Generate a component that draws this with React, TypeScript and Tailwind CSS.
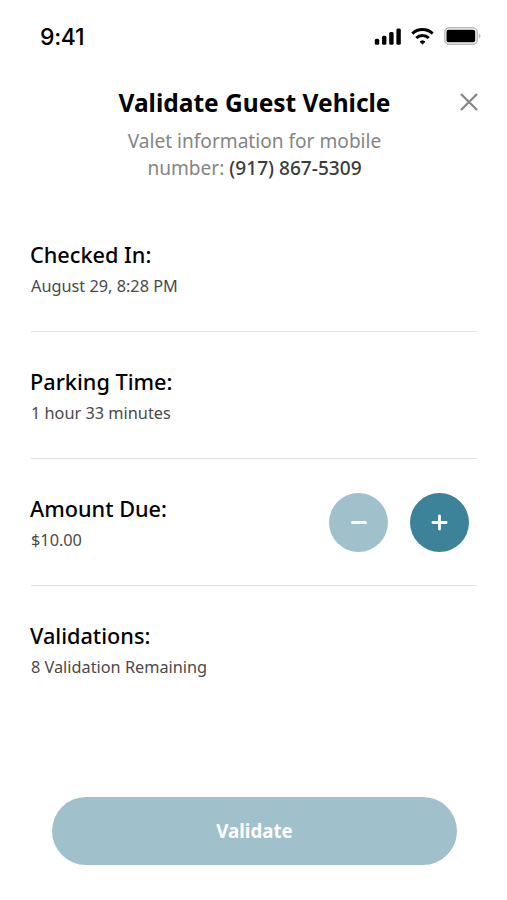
const rows = [
  { label: 'Checked In:', value: 'August 29, 8:28 PM' },
  { label: 'Parking Time:', value: '1 hour 33 minutes' },
  { label: 'Amount Due:', value: '$10.00', stepper: true },
  { label: 'Validations:', value: '8 Validation Remaining' },
];

function StatusBar() {
  return (
    <div className="flex h-[72px] items-center justify-between pl-10 pr-[26px]">
      <span className="pt-0.5 font-['Inter',sans-serif] text-[23px] font-medium leading-none tracking-[-0.3px]">9:41</span>
      <div className="flex items-center gap-[10px]">
        {/* Signal */}
        <svg width="27" height="17" viewBox="0 0 27 17" fill="currentColor">
          <rect x="0.8" y="10.8" width="4.4" height="6" rx="1.5" />
          <rect x="8" y="7.8" width="4.4" height="9" rx="1.5" />
          <rect x="15.2" y="4" width="4.4" height="12.8" rx="1.5" />
          <rect x="22.4" y="0.5" width="4.4" height="16.3" rx="1.5" />
        </svg>
        {/* Wifi */}
        <svg width="23" height="17" viewBox="0 0 23 17" fill="none" stroke="currentColor" strokeWidth="3" strokeLinejoin="round">
          <path d="M1.3 5.7a14.8 14.8 0 0 1 20.4 0" />
          <path d="M5.2 10a9.3 9.3 0 0 1 12.6 0" />
          <path d="M11.5 16l-2.4-2.300a3.800 3.800 0 0 1 4.800 0z" fill="currentColor" strokeWidth="1" />
        </svg>
        {/* Battery */}
        <svg width="37" height="18" viewBox="0 0 37 18">
          <rect x="0.8" y="0.8" width="32.4" height="16.4" rx="4.5" fill="none" stroke="#bdbdbd" strokeWidth="1.5" />
          <rect x="2.5" y="2.7" width="28.7" height="12.6" rx="2" fill="currentColor" />
          <path d="M34.7 6.500v5c1.100-.4 1.800-1.400 1.800-2.500s-.7-2.100-1.800-2.500z" fill="#bdbdbd" />
        </svg>
      </div>
    </div>
  );
}

function Stepper() {
  return (
    <div className="flex gap-[22px] pr-2">
      <button aria-label="Decrease" className="flex size-[59px] items-center justify-center rounded-full bg-[#a0c1cb]">
        <span className="h-[3px] w-4 rounded-sm bg-white" />
      </button>
      <button aria-label="Increase" className="flex size-[59px] items-center justify-center rounded-full bg-[#3c8399] text-white">
        <svg width="17" height="17" viewBox="0 0 17 17" stroke="currentColor" strokeWidth="2.8" strokeLinecap="round">
          <path d="M8.5 1.9v13.2M1.9 8.5h13.2" />
        </svg>
      </button>
    </div>
  );
}

export default function App() {
  return (
    <div className="flex h-[900px] w-[507px] flex-col overflow-hidden bg-white font-['Noto_Sans',sans-serif] text-black">
      <StatusBar />

      {/* Header */}
      <div className="relative h-[133px] pt-[14px] text-center">
        <h1 className="pl-0.5 text-[24.5px] font-bold leading-[34px]">Validate Guest Vehicle</h1>
        <div className="mt-[8px] pl-0.5 text-[19.1px] leading-[27px] text-[#858585]">
          <p>Valet information for mobile</p>
          <p>
            number: <span className="font-medium text-[#3c3c3c]">(917) 867-5309</span>
          </p>
        </div>
        <button aria-label="Close" className="absolute right-[29px] top-[21px] text-[#858585]">
          <svg width="18" height="18" viewBox="0 0 18 18" stroke="currentColor" strokeWidth="2.2">
            <path d="M1 1l16 16M17 1L1 17" />
          </svg>
        </button>
      </div>

      {/* Details */}
      <div className="pl-[31px] pr-[30px]">
        {rows.map((row) => (
          <div key={row.label} className="flex h-[127px] items-center justify-between border-b border-[#e2e2e2] last:border-b-0">
            <div className="pt-0.5">
              <h2 className="-ml-px text-[21.7px] font-medium leading-[30px]">{row.label}</h2>
              <p className="mt-[3px] text-[16.3px] leading-[26px] text-[#4a4a4a]">{row.value}</p>
            </div>
            {row.stepper && <Stepper />}
          </div>
        ))}
      </div>

      <button className="ml-[52px] mt-auto mb-[35px] h-[68px] w-[405px] rounded-full bg-[#a0c1cb] text-[18.7px] font-bold text-white">
        Validate
      </button>
    </div>
  );
}
